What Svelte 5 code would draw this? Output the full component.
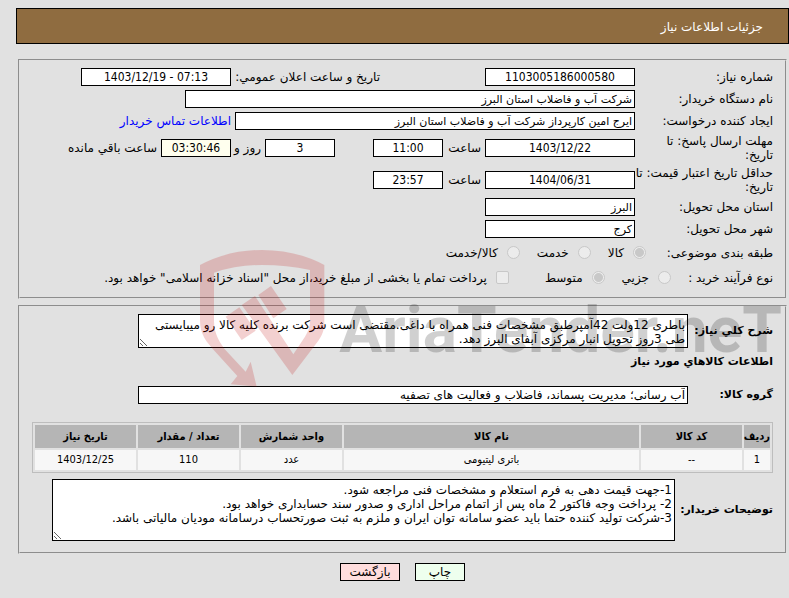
<script lang="ts">
    let goods = [
        { row: "1", code: "--", name: "باتری لیتیومی", unit: "عدد", count: "110", date: "1403/12/25" },
    ];

    let subject = "goods";
    let process = "medium";
    let treasury = false;

    let description = "باطری 12ولت 42آمپرطبق مشخصات فنی همراه با داغی.مقتضی است شرکت برنده کلیه کالا رو میبایستی طی 3روز تحویل انبار مرکزی آبفای البرز دهد.";
    let notes = "1-جهت قیمت دهی به فرم استعلام و مشخصات فنی مراجعه شود.\n2- پرداخت وجه فاکتور 2 ماه پس از اتمام مراحل اداری و صدور سند حسابداری خواهد بود.\n3-شرکت تولید کننده حتما باید عضو سامانه توان ایران و ملزم به ثبت صورتحساب درسامانه مودیان مالیاتی باشد.";
</script>

<div class="page" dir="rtl">
    <h1>جزئیات اطلاعات نیاز</h1>

    <fieldset class="details">
        <div class="row">
            <label class="title" for="number">شماره نیاز:</label>
            <div class="first"><input id="number" class="mid num" value="1103005186000580" readonly /></div>
            <label class="announce" for="announce">تاریخ و ساعت اعلان عمومي:</label>
            <input id="announce" class="mid num" value="1403/12/19 - 07:13" dir="ltr" readonly />
        </div>
        <div class="row">
            <label class="title" for="buyer">نام دستگاه خریدار:</label>
            <input id="buyer" class="wide" value="شرکت آب و فاضلاب استان البرز" readonly />
        </div>
        <div class="row">
            <label class="title" for="creator">ایجاد کننده درخواست:</label>
            <input id="creator" class="long" value="ایرج امین کارپرداز شرکت آب و فاضلاب استان البرز" readonly />
            <a href="#contact">اطلاعات تماس خریدار</a>
        </div>
        <div class="row tall">
            <label class="title" for="deadline">مهلت ارسال پاسخ: تا تاریخ:</label>
            <input id="deadline" class="mid num" value="1403/12/22" readonly />
            <label class="hour" for="deadline-time">ساعت</label>
            <input id="deadline-time" class="short num" value="11:00" readonly />
            <input class="short num days" id="days" value="3" readonly />
            <label class="day" for="days">روز و</label>
            <input id="remaining" class="short num timer" value="03:30:46" readonly />
            <label class="left" for="remaining">ساعت باقي مانده</label>
        </div>
        <div class="row tall">
            <label class="title" for="validity">حداقل تاریخ اعتبار قیمت: تا تاریخ:</label>
            <input id="validity" class="mid num" value="1404/06/31" readonly />
            <label class="hour" for="validity-time">ساعت</label>
            <input id="validity-time" class="short num" value="23:57" readonly />
        </div>
        <div class="row">
            <label class="title" for="province">استان محل تحویل:</label>
            <input id="province" class="mid" value="البرز" readonly />
        </div>
        <div class="row">
            <label class="title" for="city">شهر محل تحویل:</label>
            <input id="city" class="mid" value="کرج" readonly />
        </div>
        <div class="row options">
            <span class="caption subject">طبقه بندی موضوعی:</span>
            <label><input type="radio" bind:group={subject} value="goods" disabled />کالا</label>
            <label><input type="radio" bind:group={subject} value="service" disabled />خدمت</label>
            <label><input type="radio" bind:group={subject} value="both" disabled />کالا/خدمت</label>
        </div>
        <div class="row options">
            <span class="caption process">نوع فرآیند خرید :</span>
            <label><input type="radio" bind:group={process} value="small" disabled />جزیي</label>
            <label><input type="radio" bind:group={process} value="medium" disabled />متوسط</label>
            <label class="treasury"><input type="checkbox" bind:checked={treasury} disabled />پرداخت تمام یا بخشی از مبلغ خرید،از محل "اسناد خزانه اسلامی" خواهد بود.</label>
        </div>
    </fieldset>

    <fieldset class="items">
        <div class="area">
            <label class="side" for="description">شرح کلي نیاز:</label>
            <textarea id="description" class="description" readonly bind:value={description}></textarea>
        </div>
        <h2>اطلاعات کالاهاي مورد نیاز</h2>
        <div class="area group">
            <label class="side" for="group">گروه کالا:</label>
            <input id="group" class="full" value="آب رسانی؛ مدیریت پسماند، فاضلاب و فعالیت های تصفیه" readonly />
        </div>
        <table>
            <thead>
                <tr>
                    <th class="c-row">ردیف</th>
                    <th class="c-mid">کد کالا</th>
                    <th>نام کالا</th>
                    <th class="c-mid">واحد شمارش</th>
                    <th class="c-mid">تعداد / مقدار</th>
                    <th class="c-mid">تاریخ نیاز</th>
                </tr>
            </thead>
            <tbody>
                {#each goods as item (item.row)}
                    <tr>
                        <td>{item.row}</td>
                        <td>{item.code}</td>
                        <td>{item.name}</td>
                        <td>{item.unit}</td>
                        <td>{item.count}</td>
                        <td>{item.date}</td>
                    </tr>
                {/each}
            </tbody>
        </table>
        <div class="area">
            <label class="wide-side" for="notes">توضیحات خریدار:</label>
            <textarea id="notes" class="notes" readonly bind:value={notes}></textarea>
        </div>
    </fieldset>

    <div class="buttons">
        <button class="print">چاپ</button>
        <button class="back">بازگشت</button>
    </div>

    <svg class="watermark" viewBox="0 0 1800 450" width="600" height="150" direction="ltr">
        <path d="M30 75 Q115 30 216 30 Q320 30 403 75 V240 C403 275 396 285 385 302 L307 405 L182 232 L155 195 L195 168 L238 234 L310 343 L345 290 C355 274 360 262 360 240 V90 Q290 75 216 75 Q140 75 72 98 V245 C72 280 90 312 112 336 L167 395 L182 365 L200 440 L122 433 L142 408 L80 340 C48 304 30 284 30 240 Z" />
        <path d="M205 165 L243 138 L290 207 L250 235 Z" />
        <path d="M107 230 L148 202 L197 272 L155 300 Z" />
        <text x="448" y="336">AriaTender.neT</text>
    </svg>
</div>

<style>
    :global(body) {
        background-color: #e1e1e1;
    }

    .page {
        position: relative;
        padding: 8px 0 18px 16px;
        font-family: "DejaVu Sans", Tahoma, sans-serif;
        font-size: 12px;
        line-height: 14px;
        color: #000;
        overflow: hidden;
    }

    h1 {
        margin: 0;
        padding: 11px 25px 9px;
        border: 1px solid #000;
        background-color: #8f6c40;
        color: #fff;
        font-size: 12px;
        font-weight: normal;
        line-height: 14px;
    }

    fieldset {
        margin: 0 2px;
        border: 2px groove #e1e1e1;
        min-width: 0;
    }

    .details {
        margin-top: 15px;
        padding: 5px 12px 7px;
    }

    .items {
        margin-top: 6px;
        padding: 7px 12px 11px;
    }

    .row {
        display: flex;
        align-items: center;
        min-height: 22px;
    }

    .tall {
        min-height: 32px;
    }

    .title {
        flex: none;
        width: 138px;
    }

    .first {
        width: 255px;
    }

    .announce {
        width: 149px;
        white-space: nowrap;
    }

    input,
    textarea,
    button {
        box-sizing: border-box;
        margin: 0;
        border: 1px solid #000;
        border-radius: 0;
        font-family: inherit;
        font-size: 12px;
        line-height: 14px;
        color: #000;
    }

    input {
        height: 18px;
        padding: 1px 2px;
        background-color: #fff;
    }

    .details input {
        font-size: 11px;
    }

    .details .num {
        font-family: "DejaVu Sans Condensed", Tahoma, sans-serif;
        font-size: 12px;
        text-align: center;
    }

    .short {
        width: 70px;
    }

    .mid {
        width: 150px;
    }

    .long {
        width: 400px;
    }

    .wide {
        width: 450px;
    }

    .hour {
        width: 38px;
        padding-right: 4px;
    }

    .days {
        margin-right: 38px;
    }

    .day {
        width: 30px;
        padding-right: 4px;
    }

    .left {
        padding-right: 4px;
    }

    .timer {
        background-color: #ffffee;
    }

    a {
        margin-right: 4px;
        color: #0000ff;
        text-decoration: none;
    }

    .options {
        min-height: 25px;
    }

    .options label {
        display: flex;
        align-items: center;
        gap: 9px;
        margin-left: 17px;
        white-space: nowrap;
    }

    .options .treasury {
        margin-right: 19px;
        margin-left: 0;
    }

    .caption {
        flex: none;
        white-space: nowrap;
    }

    .subject {
        width: 127px;
    }

    .process {
        width: 102px;
    }

    input[type="radio"],
    input[type="checkbox"] {
        appearance: none;
        flex: none;
        width: 13px;
        height: 13px;
        padding: 0;
        border: 1px solid #c8c8c8;
        background-color: #ececec;
    }

    input[type="radio"] {
        border-radius: 50%;
    }

    input[type="checkbox"] {
        border-radius: 2px;
    }

    input[type="radio"]:checked {
        background-image: radial-gradient(circle, #c8c8c8 0 4px, #ececec 5px);
    }

    .area {
        display: flex;
        align-items: center;
        gap: 4px;
    }

    .area label {
        flex: none;
        font-size: 11px;
        font-weight: bold;
        white-space: nowrap;
    }

    .side {
        width: 81px;
    }

    .wide-side {
        width: 94px;
    }

    textarea {
        display: block;
        padding: 3px 2px;
        background-color: #fff;
        resize: both;
    }

    .description {
        width: 550px;
        height: 34px;
        overflow: hidden;
    }

    .notes {
        width: 623px;
        height: 62px;
    }

    h2 {
        margin: 7px 0 0;
        font-size: 11px;
        line-height: 14px;
    }

    .group {
        margin: 17px 0 18px;
    }

    .full {
        width: 550px;
    }

    table {
        table-layout: fixed;
        width: 100%;
        margin-bottom: 6px;
        border: 1px solid #bdbdbd;
        border-spacing: 2px;
        font-family: "DejaVu Sans Condensed", Tahoma, sans-serif;
        font-size: 11px;
        text-align: center;
    }

    th {
        height: 23px;
        padding: 0;
        background-color: #b5b5b5;
        font-size: 11px;
        white-space: nowrap;
    }

    td {
        height: 20px;
        padding: 0;
        background-color: #f7f7f7;
    }

    .c-row {
        width: 26px;
    }

    .c-mid {
        width: 101px;
    }

    .buttons {
        display: flex;
        justify-content: center;
        gap: 15px;
        margin-top: 9px;
    }

    button {
        height: 18px;
        padding: 0;
    }

    .print {
        width: 50px;
        background-color: #eeffee;
    }

    .back {
        width: 60px;
        background-color: #ffdddd;
    }

    .watermark {
        position: absolute;
        top: 240px;
        left: 190px;
        fill: #c00000;
        opacity: 0.18;
        pointer-events: none;
    }

    .watermark text {
        font-family: Roboto, Arial, sans-serif;
        font-size: 192px;
        font-weight: bold;
        fill: #000;
    }
</style>
